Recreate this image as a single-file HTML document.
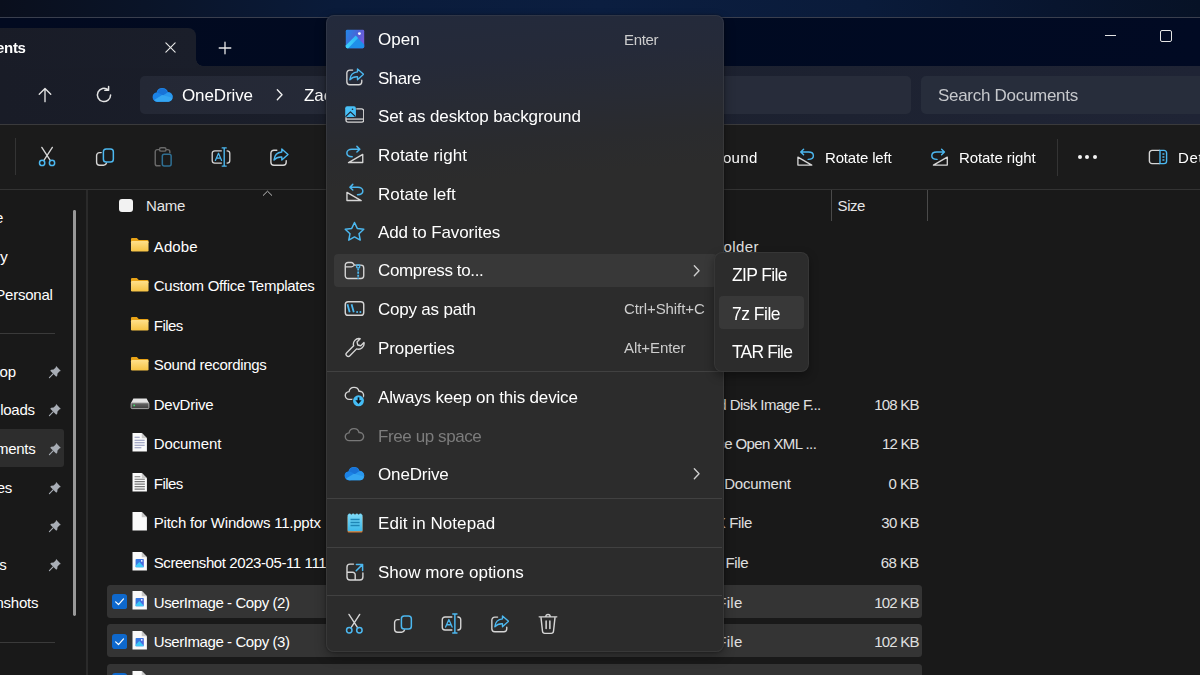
<!DOCTYPE html>
<html lang="en"><head><meta charset="utf-8"><title>File Explorer context menu</title>
<style>html,body{margin:0;padding:0;background:#191919}body{width:1200px;height:675px;overflow:hidden;position:relative;font-family:"Liberation Sans", sans-serif;-webkit-font-smoothing:antialiased}</style></head>
<body>
<div style="position:absolute;left:0px;top:0px;width:1200px;height:18px;background:linear-gradient(90deg,#0a0f1d 0%,#0a1428 12%,#0a1b3a 28%,#0b1e40 50%,#0a1b3a 72%,#08152e 88%,#071226 100%);border-radius:0px;"></div>
<div style="position:absolute;left:0px;top:17px;width:1200px;height:50px;background:linear-gradient(90deg,#020a20 0%,#000a21 50%,#010a23 100%);border-radius:0px;"></div>
<div style="position:absolute;left:0px;top:17px;width:1200px;height:1px;background:#3a3f4e;border-radius:0px;"></div>
<div style="position:absolute;left:0px;top:66px;width:1200px;height:58px;background:linear-gradient(90deg,#191c27 0%,#1a1e2a 25%,#1d2231 70%,#1f2435 100%);border-radius:0px;"></div>
<div style="position:absolute;left:-10px;top:28px;width:206px;height:40px;background:linear-gradient(90deg,#191c27 0%,#1a1e2a 100%);border-radius:0 8px 0 0;"></div>
<div style="position:absolute;left:196px;top:59px;width:7px;height:7px;background:radial-gradient(circle at 100% 0,rgba(0,0,0,0) 6.5px,#1a1e2a 7px)"></div>
<div style="position:absolute;left:140px;top:75.5px;width:771px;height:38px;background:linear-gradient(90deg,#242835 0%,#272c3a 60%);border-radius:5px;"></div>
<div style="position:absolute;left:920.5px;top:75.5px;width:300px;height:38px;background:#272d3b;border-radius:5px;"></div>
<div style="position:absolute;left:0px;top:124px;width:1200px;height:551px;background:#191919;border-radius:0px;"></div>
<div style="position:absolute;left:0px;top:123.5px;width:1200px;height:1px;background:#3a3a3c;border-radius:0px;"></div>
<div style="position:absolute;left:0px;top:124.5px;width:1200px;height:64.5px;background:#1b1b1b;border-radius:0px;"></div>
<div style="position:absolute;left:0px;top:189px;width:1200px;height:1px;background:#333333;border-radius:0px;"></div>
<span style="position:absolute;left:-53.29px;top:38.30px;line-height:20px;white-space:pre;font-size:15px;font-weight:700;color:#ffffff;letter-spacing:-0.350px;will-change:transform">Documents</span>
<svg style="position:absolute;left:164.4px;top:40.9px" width="13" height="13" viewBox="0 0 14 14"><path d="M2 2 L12 12 M12 2 L2 12" stroke="#e8e8e8" stroke-width="1.2" stroke-linecap="round"/></svg>
<svg style="position:absolute;left:217.5px;top:41px" width="14" height="14" viewBox="0 0 14 14"><path d="M7 1.2 V12.8 M1.2 7 H12.8" stroke="#e8e8e8" stroke-width="1.3" stroke-linecap="round"/></svg>
<div style="position:absolute;left:1104.5px;top:34.5px;width:11.5px;height:1.2px;background:#e4e4e4;border-radius:0px;"></div>
<div style="position:absolute;left:1160px;top:30px;width:9.6px;height:9.6px;border:1.2px solid #e4e4e4;border-radius:2px"></div>
<svg style="position:absolute;left:36.20px;top:86.00px;" width="18" height="18" viewBox="0 0 20 20" fill="none"><path d="M10 17.4 V3 M3.6 9.2 L10 2.8 L16.4 9.2" stroke="#e4e4e4" stroke-width="1.5" stroke-linecap="round" stroke-linejoin="round"/></svg>
<svg style="position:absolute;left:93.50px;top:85.00px;" width="20" height="20" viewBox="0 0 20 20" fill="none"><path d="M16.6 10 a6.6 6.6 0 1 1 -2.6 -5.3 M14.6 1.4 V5.2 H10.8" stroke="#e4e4e4" stroke-width="1.5" stroke-linecap="round" stroke-linejoin="round"/></svg>
<svg style="position:absolute;left:152.25px;top:83.75px;" width="21.5" height="21.5" viewBox="0 0 20 20" fill="none"><path d="M5 15.8 a3.7 3.7 0 0 1 -0.2 -7.4 a4.85 4.85 0 0 1 9.5 -0.3 a3.55 3.55 0 0 1 1 7.7 Z" fill="#1f86e6" stroke="#1f86e6" stroke-width="1.3" stroke-linejoin="round"/><path d="M4.8 8.4 a4.85 4.85 0 0 1 9.5 -0.3 L9 11.6 Z" fill="#1873d8"/><path d="M1 12.6 a3.7 3.7 0 0 1 3.8 -4.2 c1.6 0 3 .6 4.6 1.8 L13.6 13 L6 16.4 H5 a3.8 3.8 0 0 1 -4 -3.8 Z" fill="#1b82e6"/><path d="M9 11.4 L14.3 8.1 a3.9 3.9 0 0 1 4.8 4.5 L13.4 13.4 Z" fill="#2a98ee"/><path d="M2 14.8 L9.4 10.2 L19 12.8 a3.9 3.9 0 0 1 -3.7 3.6 H5 a3.8 3.8 0 0 1 -3 -1.6 Z" fill="#35a6f2"/></svg>
<span style="position:absolute;left:181.95px;top:85.80px;line-height:20px;white-space:pre;font-size:17px;font-weight:400;color:#ffffff;letter-spacing:-0.114px;will-change:transform">OneDrive</span>
<svg style="position:absolute;left:273.05px;top:88.45px;" width="13.5" height="13.5" viewBox="0 0 20 20" fill="none"><path d="M6.4 2.6 L13.4 10 L6.4 17.4" stroke="#f0f0f0" stroke-width="2" stroke-linecap="round" stroke-linejoin="round"/></svg>
<span style="position:absolute;left:304.05px;top:85.80px;line-height:20px;white-space:pre;font-size:17px;font-weight:400;color:#ffffff;letter-spacing:-0.015px;will-change:transform">Zac</span>
<span style="position:absolute;left:938.45px;top:86.00px;line-height:20px;white-space:pre;font-size:17px;font-weight:400;color:#c6c8cc;letter-spacing:-0.292px;will-change:transform">Search Documents</span>
<div style="position:absolute;left:15.2px;top:138px;width:1px;height:37px;background:#343434;border-radius:0px;"></div>
<svg style="position:absolute;left:36.45px;top:146.25px;" width="21.5" height="21.5" viewBox="0 0 20 20" fill="none"><path d="M5.4 1.3 L13.4 13.5 M15.2 1.3 L7.2 13.5" stroke="#d6d6d6" stroke-width="1.25" stroke-linecap="round"/><circle cx="5.7" cy="15.7" r="2.45" stroke="#4cb8f0" stroke-width="1.4"/><circle cx="14.9" cy="15.7" r="2.45" stroke="#4cb8f0" stroke-width="1.4"/></svg>
<svg style="position:absolute;left:95.00px;top:147.30px;" width="20" height="20" viewBox="0 0 20 20" fill="none"><path d="M6.2 5.6 H4.6 a3 3 0 0 0 -3 3 V15.2 a3 3 0 0 0 3 3 H8.6 a3 3 0 0 0 2.9 -2.2" stroke="#d6d6d6" stroke-width="1.4" stroke-linecap="round"/><rect x="8.4" y="1.95" width="9.95" height="13.1" rx="2.8" stroke="#4cb8f0" stroke-width="1.5"/></svg>
<svg style="position:absolute;left:152.25px;top:146.25px;" width="21.5" height="21.5" viewBox="0 0 20 20" fill="none"><path d="M7 3.4 H5 a2 2 0 0 0 -2 2 v11 a2 2 0 0 0 2 2 h3" stroke="#6a6a6a" stroke-width="1.3"/><path d="M13 3.4 h1.6 a2 2 0 0 1 2 2 v1.4" stroke="#6a6a6a" stroke-width="1.3"/><rect x="7" y="1.6" width="6" height="3.2" rx="1.4" stroke="#6a6a6a" stroke-width="1.3"/><rect x="9.6" y="7.6" width="8.2" height="11" rx="1.8" stroke="#2f6f93" stroke-width="1.4"/></svg>
<svg style="position:absolute;left:210.80px;top:147.00px;" width="20" height="20" viewBox="0 0 20 20" fill="none"><path d="M10.8 3.8 H3.8 a2.6 2.6 0 0 0 -2.6 2.6 v7.2 a2.6 2.6 0 0 0 2.6 2.6 H10.8" stroke="#d6d6d6" stroke-width="1.3"/><path d="M15.6 3.8 h0.6 a2.6 2.6 0 0 1 2.6 2.6 v7.2 a2.6 2.6 0 0 1 -2.6 2.6 h-0.6" stroke="#d6d6d6" stroke-width="1.3"/><path d="M4.4 13.4 L7.5 6.2 L10.6 13.4 M5.5 11.2 H9.5" stroke="#4cb8f0" stroke-width="1.25" stroke-linejoin="round" stroke-linecap="round"/><path d="M13.2 0.9 V19.1 M11.2 0.9 H15.2 M11.2 19.1 H15.2" stroke="#4cb8f0" stroke-width="1.4" stroke-linecap="round"/></svg>
<svg style="position:absolute;left:269.00px;top:147.30px;" width="20" height="20" viewBox="0 0 20 20" fill="none"><path d="M7.8 3.2 H4.9 a3 3 0 0 0 -3 3 v9 a3 3 0 0 0 3 3 h9.3 a3 3 0 0 0 3 -3 v-1.6" stroke="#d6d6d6" stroke-width="1.4" stroke-linecap="round"/><path d="M12.8 2 L19 7.5 L12.8 13 V10 C9.6 9.8 7 10.8 5 13 C5.4 8.6 8 5.4 12.8 5 Z" stroke="#4cb8f0" stroke-width="1.4" stroke-linejoin="round"/></svg>
<span style="position:absolute;left:567.35px;top:148.00px;line-height:20px;white-space:pre;font-size:15px;font-weight:400;color:#ffffff;letter-spacing:0.356px;will-change:transform">Set as desktop background</span>
<svg style="position:absolute;left:796.30px;top:147.70px;" width="19" height="19" viewBox="0 0 20 20" fill="none"><path d="M16.6 18 H2 V9.6 Z" stroke="#d6d6d6" stroke-width="1.4" stroke-linejoin="round"/><path d="M12.8 12 C16.2 12 18.3 10.4 18.3 8.2 C18.3 6 16.2 4.3 13.2 4.3 H5.8 M8 1.4 L5 4.3 L8 7.2" stroke="#4cb8f0" stroke-width="1.5" stroke-linecap="round" stroke-linejoin="round"/></svg>
<span style="position:absolute;left:824.75px;top:148.00px;line-height:20px;white-space:pre;font-size:15px;font-weight:400;color:#ffffff;letter-spacing:-0.170px;will-change:transform">Rotate left</span>
<svg style="position:absolute;left:930.30px;top:147.70px;" width="19" height="19" viewBox="0 0 20 20" fill="none"><path d="M3.6 18 H18.2 V9.6 Z" stroke="#d6d6d6" stroke-width="1.4" stroke-linejoin="round"/><path d="M7.4 12 C4 12 1.9 10.4 1.9 8.2 C1.9 6 4 4.3 7 4.3 H14.4 M12.2 1.4 L15.2 4.3 L12.2 7.2" stroke="#4cb8f0" stroke-width="1.5" stroke-linecap="round" stroke-linejoin="round"/></svg>
<span style="position:absolute;left:959.05px;top:148.00px;line-height:20px;white-space:pre;font-size:15px;font-weight:400;color:#ffffff;letter-spacing:-0.087px;will-change:transform">Rotate right</span>
<div style="position:absolute;left:1057px;top:138.5px;width:1px;height:37px;background:#343434;border-radius:0px;"></div>
<div style="position:absolute;left:1077.8px;top:155.1px;width:4px;height:4px;background:#f4f4f4;border-radius:2px;"></div>
<div style="position:absolute;left:1085.3999999999999px;top:155.1px;width:4px;height:4px;background:#f4f4f4;border-radius:2px;"></div>
<div style="position:absolute;left:1093.0px;top:155.1px;width:4px;height:4px;background:#f4f4f4;border-radius:2px;"></div>
<svg style="position:absolute;left:1148.20px;top:147.30px;" width="20" height="20" viewBox="0 0 20 20" fill="none"><path d="M12 3.4 H4 a2.6 2.6 0 0 0 -2.6 2.6 v8 a2.6 2.6 0 0 0 2.6 2.6 H12" stroke="#d6d6d6" stroke-width="1.4"/><path d="M12 3.4 H16 a2.6 2.6 0 0 1 2.6 2.6 v8 a2.6 2.6 0 0 1 -2.6 2.6 H12 Z" stroke="#4cb8f0" stroke-width="1.4"/><path d="M14.4 7 H16.4 M14.4 10 H16.4 M14.4 13 H16.4" stroke="#4cb8f0" stroke-width="1.3"/></svg>
<span style="position:absolute;left:1177.75px;top:148.00px;line-height:20px;white-space:pre;font-size:15px;font-weight:400;color:#ffffff;letter-spacing:0.719px;will-change:transform">Det</span>
<div style="position:absolute;left:86px;top:190px;width:2px;height:485px;background:#2a2a2a;border-radius:0px;"></div>
<div style="position:absolute;left:73.1px;top:210.3px;width:2.8px;height:405.4px;background:#989898;border-radius:1.4px;"></div>
<div style="position:absolute;left:-6px;top:429.4px;width:70.2px;height:37.8px;background:#2d2d2d;border-radius:3px;"></div>
<div style="position:absolute;left:0px;top:333px;width:54.5px;height:1px;background:#3a3a3a;border-radius:0px;"></div>
<div style="position:absolute;left:0px;top:641.5px;width:54.8px;height:1px;background:#3a3a3a;border-radius:0px;"></div>
<span style="position:absolute;left:-35.87px;top:208.20px;line-height:20px;white-space:pre;font-size:15px;font-weight:400;color:#ffffff;letter-spacing:-0.250px">Home</span>
<span style="position:absolute;left:-38.22px;top:247.40px;line-height:20px;white-space:pre;font-size:15px;font-weight:400;color:#ffffff;letter-spacing:-0.250px">Gallery</span>
<span style="position:absolute;left:-78.59px;top:284.60px;line-height:20px;white-space:pre;font-size:15px;font-weight:400;color:#ffffff;letter-spacing:-0.250px">OneDrive - Personal</span>
<span style="position:absolute;left:-37.53px;top:362.30px;line-height:20px;white-space:pre;font-size:15px;font-weight:400;color:#ffffff;letter-spacing:-0.250px">Desktop</span>
<span style="position:absolute;left:-37.22px;top:400.10px;line-height:20px;white-space:pre;font-size:15px;font-weight:400;color:#ffffff;letter-spacing:-0.250px">Downloads</span>
<span style="position:absolute;left:-38.09px;top:439.00px;line-height:20px;white-space:pre;font-size:15px;font-weight:400;color:#ffffff;letter-spacing:-0.250px">Documents</span>
<span style="position:absolute;left:-40.14px;top:478.20px;line-height:20px;white-space:pre;font-size:15px;font-weight:400;color:#ffffff;letter-spacing:-0.250px">Pictures</span>
<span style="position:absolute;left:-37.64px;top:554.80px;line-height:20px;white-space:pre;font-size:15px;font-weight:400;color:#ffffff;letter-spacing:-0.250px">Videos</span>
<span style="position:absolute;left:-42.49px;top:593.40px;line-height:20px;white-space:pre;font-size:15px;font-weight:400;color:#ffffff;letter-spacing:-0.250px">Screenshots</span>
<svg style="position:absolute;left:47.80px;top:364.50px;" width="14" height="14" viewBox="0 0 20 20" fill="none"><path d="M11.6 1.6 L18.4 8.4 L16.6 9 L13.6 12 L13.2 15.4 L11.8 16.8 L3.2 8.2 L4.6 6.8 L8 6.4 L11 3.4 Z" fill="#a8adb5"/><path d="M7.2 12.8 L2 18" stroke="#a8adb5" stroke-width="1.6" stroke-linecap="round"/></svg>
<svg style="position:absolute;left:47.80px;top:403.00px;" width="14" height="14" viewBox="0 0 20 20" fill="none"><path d="M11.6 1.6 L18.4 8.4 L16.6 9 L13.6 12 L13.2 15.4 L11.8 16.8 L3.2 8.2 L4.6 6.8 L8 6.4 L11 3.4 Z" fill="#a8adb5"/><path d="M7.2 12.8 L2 18" stroke="#a8adb5" stroke-width="1.6" stroke-linecap="round"/></svg>
<svg style="position:absolute;left:47.80px;top:442.00px;" width="14" height="14" viewBox="0 0 20 20" fill="none"><path d="M11.6 1.6 L18.4 8.4 L16.6 9 L13.6 12 L13.2 15.4 L11.8 16.8 L3.2 8.2 L4.6 6.8 L8 6.4 L11 3.4 Z" fill="#a8adb5"/><path d="M7.2 12.8 L2 18" stroke="#a8adb5" stroke-width="1.6" stroke-linecap="round"/></svg>
<svg style="position:absolute;left:47.80px;top:481.00px;" width="14" height="14" viewBox="0 0 20 20" fill="none"><path d="M11.6 1.6 L18.4 8.4 L16.6 9 L13.6 12 L13.2 15.4 L11.8 16.8 L3.2 8.2 L4.6 6.8 L8 6.4 L11 3.4 Z" fill="#a8adb5"/><path d="M7.2 12.8 L2 18" stroke="#a8adb5" stroke-width="1.6" stroke-linecap="round"/></svg>
<svg style="position:absolute;left:47.80px;top:519.00px;" width="14" height="14" viewBox="0 0 20 20" fill="none"><path d="M11.6 1.6 L18.4 8.4 L16.6 9 L13.6 12 L13.2 15.4 L11.8 16.8 L3.2 8.2 L4.6 6.8 L8 6.4 L11 3.4 Z" fill="#a8adb5"/><path d="M7.2 12.8 L2 18" stroke="#a8adb5" stroke-width="1.6" stroke-linecap="round"/></svg>
<svg style="position:absolute;left:47.80px;top:558.00px;" width="14" height="14" viewBox="0 0 20 20" fill="none"><path d="M11.6 1.6 L18.4 8.4 L16.6 9 L13.6 12 L13.2 15.4 L11.8 16.8 L3.2 8.2 L4.6 6.8 L8 6.4 L11 3.4 Z" fill="#a8adb5"/><path d="M7.2 12.8 L2 18" stroke="#a8adb5" stroke-width="1.6" stroke-linecap="round"/></svg>
<div style="position:absolute;left:119.2px;top:198.8px;width:14px;height:13.4px;background:#f2f2f2;border-radius:3px;"></div>
<span style="position:absolute;left:146.05px;top:196.40px;line-height:20px;white-space:pre;font-size:15px;font-weight:400;color:#e6e6e6;letter-spacing:-0.254px">Name</span>
<svg style="position:absolute;left:261.5px;top:190.2px" width="11" height="7" viewBox="0 0 11 7"><path d="M1 5.6 L5.5 1.2 L10 5.6" stroke="#bdbdbd" stroke-width="1" fill="none"/></svg>
<div style="position:absolute;left:831px;top:190px;width:1px;height:31px;background:#4a4a4a;border-radius:0px;"></div>
<div style="position:absolute;left:927px;top:190px;width:1px;height:31px;background:#4a4a4a;border-radius:0px;"></div>
<span style="position:absolute;left:837.55px;top:196.20px;line-height:20px;white-space:pre;font-size:15px;font-weight:400;color:#e6e6e6;letter-spacing:-0.422px">Size</span>
<div style="position:absolute;left:107.2px;top:584.5px;width:815.3px;height:33px;background:#343434;border-radius:3.5px;"></div>
<div style="position:absolute;left:107.2px;top:624.1px;width:815.3px;height:33px;background:#343434;border-radius:3.5px;"></div>
<div style="position:absolute;left:107.2px;top:663.6px;width:815.3px;height:33px;background:#343434;border-radius:3.5px;"></div>
<svg style="position:absolute;left:129.85px;top:235.35px;" width="19.5" height="19.5" viewBox="0 0 20 20" fill="none"><defs><linearGradient id="fg1" x1="0" y1="0" x2="0" y2="1"><stop offset="0" stop-color="#ffe08a"/><stop offset="1" stop-color="#f6c344"/></linearGradient></defs><path d="M1 4.2 a1.2 1.2 0 0 1 1.2 -1.2 H7 L9 5 H17.8 a1.2 1.2 0 0 1 1.2 1.2 V8 H1 Z" fill="#e8a317"/><rect x="1" y="6.2" width="18" height="10.6" rx="1.2" fill="url(#fg1)"/></svg>
<span style="position:absolute;left:153.75px;top:236.60px;line-height:20px;white-space:pre;font-size:15px;font-weight:400;color:#ffffff;letter-spacing:0.125px">Adobe</span>
<svg style="position:absolute;left:129.85px;top:274.90px;" width="19.5" height="19.5" viewBox="0 0 20 20" fill="none"><defs><linearGradient id="fg2" x1="0" y1="0" x2="0" y2="1"><stop offset="0" stop-color="#ffe08a"/><stop offset="1" stop-color="#f6c344"/></linearGradient></defs><path d="M1 4.2 a1.2 1.2 0 0 1 1.2 -1.2 H7 L9 5 H17.8 a1.2 1.2 0 0 1 1.2 1.2 V8 H1 Z" fill="#e8a317"/><rect x="1" y="6.2" width="18" height="10.6" rx="1.2" fill="url(#fg2)"/></svg>
<span style="position:absolute;left:153.75px;top:276.15px;line-height:20px;white-space:pre;font-size:15px;font-weight:400;color:#ffffff;letter-spacing:-0.270px">Custom Office Templates</span>
<svg style="position:absolute;left:129.85px;top:314.45px;" width="19.5" height="19.5" viewBox="0 0 20 20" fill="none"><defs><linearGradient id="fg3" x1="0" y1="0" x2="0" y2="1"><stop offset="0" stop-color="#ffe08a"/><stop offset="1" stop-color="#f6c344"/></linearGradient></defs><path d="M1 4.2 a1.2 1.2 0 0 1 1.2 -1.2 H7 L9 5 H17.8 a1.2 1.2 0 0 1 1.2 1.2 V8 H1 Z" fill="#e8a317"/><rect x="1" y="6.2" width="18" height="10.6" rx="1.2" fill="url(#fg3)"/></svg>
<span style="position:absolute;left:153.75px;top:315.70px;line-height:20px;white-space:pre;font-size:15px;font-weight:400;color:#ffffff;letter-spacing:-0.534px">Files</span>
<svg style="position:absolute;left:129.85px;top:354.00px;" width="19.5" height="19.5" viewBox="0 0 20 20" fill="none"><defs><linearGradient id="fg4" x1="0" y1="0" x2="0" y2="1"><stop offset="0" stop-color="#ffe08a"/><stop offset="1" stop-color="#f6c344"/></linearGradient></defs><path d="M1 4.2 a1.2 1.2 0 0 1 1.2 -1.2 H7 L9 5 H17.8 a1.2 1.2 0 0 1 1.2 1.2 V8 H1 Z" fill="#e8a317"/><rect x="1" y="6.2" width="18" height="10.6" rx="1.2" fill="url(#fg4)"/></svg>
<span style="position:absolute;left:153.75px;top:355.25px;line-height:20px;white-space:pre;font-size:15px;font-weight:400;color:#ffffff;letter-spacing:-0.299px">Sound recordings</span>
<svg style="position:absolute;left:129.80px;top:392.90px;" width="20" height="20" viewBox="0 0 20 20" fill="none"><defs><linearGradient id="dg5" x1="0" y1="0" x2="0" y2="1"><stop offset="0" stop-color="#6a6a6a"/><stop offset="1" stop-color="#3c3c3c"/></linearGradient></defs><path d="M3.4 5.6 H16.6 L19 10 H1 Z" fill="#e4e4e4"/><rect x="1.1" y="9.8" width="17.8" height="5.8" rx="1" fill="url(#dg5)" stroke="#c4c4c4" stroke-width=".8"/><circle cx="4.2" cy="12.4" r=".9" fill="#3fe06a"/></svg>
<span style="position:absolute;left:153.75px;top:394.80px;line-height:20px;white-space:pre;font-size:15px;font-weight:400;color:#ffffff;letter-spacing:-0.273px">DevDrive</span>
<svg style="position:absolute;left:129.30px;top:431.95px;" width="20.6" height="20.6" viewBox="0 0 20 20" fill="none"><path d="M3.4 1 H12.4 L17.4 6 V19 H3.4 Z" fill="#fafafa"/><path d="M12.4 1 V6 H17.4 Z" fill="#c9c9c9"/><path d="M5.4 5 H10.4 M5.4 8 H15.2 M5.4 10.4 H15.2 M5.4 12.8 H15.2 M5.4 15.2 H12" stroke="#8d93b8" stroke-width="1"/></svg>
<span style="position:absolute;left:153.75px;top:434.35px;line-height:20px;white-space:pre;font-size:15px;font-weight:400;color:#ffffff;letter-spacing:-0.109px">Document</span>
<svg style="position:absolute;left:129.30px;top:471.50px;" width="20.6" height="20.6" viewBox="0 0 20 20" fill="none"><path d="M3.4 1 H12.4 L17.4 6 V19 H3.4 Z" fill="#fafafa"/><path d="M12.4 1 V6 H17.4 Z" fill="#c9c9c9"/><path d="M5.4 4.6 H11 M5.4 7 H15.4 M5.4 9.4 H15.4 M5.4 11.8 H15.4 M5.4 14.2 H15.4 M5.4 16.6 H15.4" stroke="#777" stroke-width="1.1"/></svg>
<span style="position:absolute;left:153.75px;top:473.90px;line-height:20px;white-space:pre;font-size:15px;font-weight:400;color:#ffffff;letter-spacing:-0.534px">Files</span>
<svg style="position:absolute;left:129.30px;top:511.05px;" width="20.6" height="20.6" viewBox="0 0 20 20" fill="none"><path d="M3.4 1 H12.4 L17.4 6 V19 H3.4 Z" fill="#fafafa"/><path d="M12.4 1 V6 H17.4 Z" fill="#c9c9c9"/></svg>
<span style="position:absolute;left:153.75px;top:513.45px;line-height:20px;white-space:pre;font-size:15px;font-weight:400;color:#ffffff;letter-spacing:-0.212px">Pitch for Windows 11.pptx</span>
<svg style="position:absolute;left:129.30px;top:550.60px;" width="20.6" height="20.6" viewBox="0 0 20 20" fill="none"><path d="M3.4 1 H12.4 L17.4 6 V19 H3.4 Z" fill="#fafafa"/><path d="M12.4 1 V6 H17.4 Z" fill="#c9c9c9"/><defs><linearGradient id="ig6" x1="0" y1="0" x2="1" y2="1"><stop offset="0" stop-color="#2f7fe4"/><stop offset="1" stop-color="#5a5fd8"/></linearGradient></defs><rect x="6.4" y="7.8" width="8" height="8" rx=".8" fill="url(#ig6)"/><path d="M6.4 14.4 L10 10.8 L14.4 15.2 V15.8 H6.4 Z" fill="#3cc8f8"/><circle cx="12.4" cy="9.6" r=".8" fill="#fff"/></svg>
<span style="position:absolute;left:153.75px;top:553.00px;line-height:20px;white-space:pre;font-size:15px;font-weight:400;color:#ffffff;letter-spacing:-0.410px">Screenshot 2023-05-11 111</span>
<svg style="position:absolute;left:129.30px;top:590.15px;" width="20.6" height="20.6" viewBox="0 0 20 20" fill="none"><path d="M3.4 1 H12.4 L17.4 6 V19 H3.4 Z" fill="#fafafa"/><path d="M12.4 1 V6 H17.4 Z" fill="#c9c9c9"/><defs><linearGradient id="ig7" x1="0" y1="0" x2="1" y2="1"><stop offset="0" stop-color="#2f7fe4"/><stop offset="1" stop-color="#5a5fd8"/></linearGradient></defs><rect x="6.4" y="7.8" width="8" height="8" rx=".8" fill="url(#ig7)"/><path d="M6.4 14.4 L10 10.8 L14.4 15.2 V15.8 H6.4 Z" fill="#3cc8f8"/><circle cx="12.4" cy="9.6" r=".8" fill="#fff"/></svg>
<span style="position:absolute;left:153.75px;top:592.55px;line-height:20px;white-space:pre;font-size:15px;font-weight:400;color:#ffffff;letter-spacing:-0.421px">UserImage - Copy (2)</span>
<svg style="position:absolute;left:129.30px;top:629.70px;" width="20.6" height="20.6" viewBox="0 0 20 20" fill="none"><path d="M3.4 1 H12.4 L17.4 6 V19 H3.4 Z" fill="#fafafa"/><path d="M12.4 1 V6 H17.4 Z" fill="#c9c9c9"/><defs><linearGradient id="ig8" x1="0" y1="0" x2="1" y2="1"><stop offset="0" stop-color="#2f7fe4"/><stop offset="1" stop-color="#5a5fd8"/></linearGradient></defs><rect x="6.4" y="7.8" width="8" height="8" rx=".8" fill="url(#ig8)"/><path d="M6.4 14.4 L10 10.8 L14.4 15.2 V15.8 H6.4 Z" fill="#3cc8f8"/><circle cx="12.4" cy="9.6" r=".8" fill="#fff"/></svg>
<span style="position:absolute;left:153.75px;top:632.10px;line-height:20px;white-space:pre;font-size:15px;font-weight:400;color:#ffffff;letter-spacing:-0.421px">UserImage - Copy (3)</span>
<svg style="position:absolute;left:129.30px;top:669.55px;" width="20.6" height="20.6" viewBox="0 0 20 20" fill="none"><path d="M3.4 1 H12.4 L17.4 6 V19 H3.4 Z" fill="#fafafa"/><path d="M12.4 1 V6 H17.4 Z" fill="#c9c9c9"/><defs><linearGradient id="ig9" x1="0" y1="0" x2="1" y2="1"><stop offset="0" stop-color="#2f7fe4"/><stop offset="1" stop-color="#5a5fd8"/></linearGradient></defs><rect x="6.4" y="7.8" width="8" height="8" rx=".8" fill="url(#ig9)"/><path d="M6.4 14.4 L10 10.8 L14.4 15.2 V15.8 H6.4 Z" fill="#3cc8f8"/><circle cx="12.4" cy="9.6" r=".8" fill="#fff"/></svg>
<svg style="position:absolute;left:112px;top:593.95px" width="15.2" height="15.2" viewBox="0 0 15 15"><rect width="15" height="15" rx="3" fill="#0e68cc"/><path d="M3.6 7.8 L6.4 10.4 L11.4 4.8" stroke="#fff" stroke-width="1.2" fill="none" stroke-linecap="round" stroke-linejoin="round"/></svg>
<svg style="position:absolute;left:112px;top:633.5px" width="15.2" height="15.2" viewBox="0 0 15 15"><rect width="15" height="15" rx="3" fill="#0e68cc"/><path d="M3.6 7.8 L6.4 10.4 L11.4 4.8" stroke="#fff" stroke-width="1.2" fill="none" stroke-linecap="round" stroke-linejoin="round"/></svg>
<svg style="position:absolute;left:112px;top:673.05px" width="15.2" height="15.2" viewBox="0 0 15 15"><rect width="15" height="15" rx="3" fill="#0e68cc"/><path d="M3.6 7.8 L6.4 10.4 L11.4 4.8" stroke="#fff" stroke-width="1.2" fill="none" stroke-linecap="round" stroke-linejoin="round"/></svg>
<span style="position:absolute;left:688.47px;top:236.60px;line-height:20px;white-space:pre;font-size:15px;font-weight:400;color:#e0e0e0;letter-spacing:0.428px">File folder</span>
<span style="position:absolute;left:695.80px;top:394.80px;line-height:20px;white-space:pre;font-size:15px;font-weight:400;color:#e0e0e0;letter-spacing:-0.547px">Hard Disk Image F...</span>
<span style="position:absolute;left:696.65px;top:434.35px;line-height:20px;white-space:pre;font-size:15px;font-weight:400;color:#e0e0e0;letter-spacing:-0.595px">Office Open XML ...</span>
<span style="position:absolute;left:693.73px;top:473.90px;line-height:20px;white-space:pre;font-size:15px;font-weight:400;color:#e0e0e0;letter-spacing:-0.234px">Text Document</span>
<span style="position:absolute;left:687.61px;top:513.45px;line-height:20px;white-space:pre;font-size:15px;font-weight:400;color:#e0e0e0;letter-spacing:-0.343px">PPTX File</span>
<span style="position:absolute;left:690.33px;top:553.00px;line-height:20px;white-space:pre;font-size:15px;font-weight:400;color:#e0e0e0;letter-spacing:-0.368px">PNG File</span>
<span style="position:absolute;left:682.93px;top:592.55px;line-height:20px;white-space:pre;font-size:15px;font-weight:400;color:#e0e0e0;letter-spacing:0.261px">JPG File</span>
<span style="position:absolute;left:682.93px;top:632.10px;line-height:20px;white-space:pre;font-size:15px;font-weight:400;color:#e0e0e0;letter-spacing:0.261px">JPG File</span>
<span style="position:absolute;left:874.25px;top:394.80px;line-height:20px;white-space:pre;font-size:15px;font-weight:400;color:#e0e0e0;letter-spacing:-0.786px">108 KB</span>
<span style="position:absolute;left:882.05px;top:434.35px;line-height:20px;white-space:pre;font-size:15px;font-weight:400;color:#e0e0e0;letter-spacing:-0.835px">12 KB</span>
<span style="position:absolute;left:888.55px;top:473.90px;line-height:20px;white-space:pre;font-size:15px;font-weight:400;color:#e0e0e0;letter-spacing:-0.583px">0 KB</span>
<span style="position:absolute;left:881.25px;top:513.45px;line-height:20px;white-space:pre;font-size:15px;font-weight:400;color:#e0e0e0;letter-spacing:-0.675px">30 KB</span>
<span style="position:absolute;left:880.75px;top:553.00px;line-height:20px;white-space:pre;font-size:15px;font-weight:400;color:#e0e0e0;letter-spacing:-0.575px">68 KB</span>
<span style="position:absolute;left:874.25px;top:592.55px;line-height:20px;white-space:pre;font-size:15px;font-weight:400;color:#e0e0e0;letter-spacing:-0.786px">102 KB</span>
<span style="position:absolute;left:874.25px;top:632.10px;line-height:20px;white-space:pre;font-size:15px;font-weight:400;color:#e0e0e0;letter-spacing:-0.786px">102 KB</span>
<div style="position:absolute;left:325.8px;top:14.5px;width:398.0px;height:637.1px;border-radius:8px;background:linear-gradient(176deg,#232a3c 0px,#252a39 55px,#282b34 100px,#2a2b2e 140px,#2c2c2c 175px,#2c2c2c 100%);box-shadow:inset 0 0 0 1px rgba(255,255,255,0.06),0 5px 12px rgba(0,0,0,0.30),0 0 3px rgba(0,0,0,0.40)"></div>
<div style="position:absolute;left:333.6px;top:253.8px;width:383px;height:33px;background:#383838;border-radius:4px;"></div>
<div style="position:absolute;left:326.8px;top:371.0px;width:395.6px;height:1px;background:#414141;border-radius:0px;"></div>
<div style="position:absolute;left:326.8px;top:497.8px;width:395.6px;height:1px;background:#414141;border-radius:0px;"></div>
<div style="position:absolute;left:326.8px;top:547.1px;width:395.6px;height:1px;background:#414141;border-radius:0px;"></div>
<div style="position:absolute;left:326.8px;top:595.2px;width:395.6px;height:1px;background:#414141;border-radius:0px;"></div>
<svg style="position:absolute;left:344.70px;top:28.50px;" width="20" height="20" viewBox="0 0 20 20" fill="none"><defs><linearGradient id="pg110" x1="0" y1="0.2" x2="1" y2="0.6"><stop offset="0" stop-color="#2684e6"/><stop offset="0.55" stop-color="#4a63d6"/><stop offset="1" stop-color="#7a5cdc"/></linearGradient><linearGradient id="pg211" x1="0" y1="1" x2="1" y2="0"><stop offset="0" stop-color="#3fd4fb"/><stop offset="1" stop-color="#2fb4f6"/></linearGradient></defs><rect x="0.8" y="0.8" width="18.4" height="18.4" rx="1.4" fill="url(#pg110)"/><path d="M10.7 6.9 L19.2 15.4 V17.8 a1.4 1.4 0 0 1 -1.4 1.4 H2.2 a1.4 1.4 0 0 1 -1.4 -1.4 V16.6 Z" fill="#1e8fea"/><path d="M0.8 16.4 L10.7 6.6 L13.1 9 L3.2 19.2 H2.2 a1.4 1.4 0 0 1 -1.4 -1.4 Z" fill="url(#pg211)"/><circle cx="14.4" cy="4.6" r="1.45" fill="#f6f4ff"/></svg>
<span style="position:absolute;left:377.95px;top:30.20px;line-height:20px;white-space:pre;font-size:17px;font-weight:400;color:#ffffff;letter-spacing:0.027px;will-change:transform">Open</span>
<svg style="position:absolute;left:344.85px;top:67.45px;" width="19.5" height="19.5" viewBox="0 0 20 20" fill="none"><path d="M7.8 3.2 H4.9 a3 3 0 0 0 -3 3 v9 a3 3 0 0 0 3 3 h9.3 a3 3 0 0 0 3 -3 v-1.6" stroke="#d6d6d6" stroke-width="1.4" stroke-linecap="round"/><path d="M12.8 2 L19 7.5 L12.8 13 V10 C9.6 9.8 7 10.8 5 13 C5.4 8.6 8 5.4 12.8 5 Z" stroke="#4cb8f0" stroke-width="1.4" stroke-linejoin="round"/></svg>
<span style="position:absolute;left:377.95px;top:68.80px;line-height:20px;white-space:pre;font-size:17px;font-weight:400;color:#ffffff;letter-spacing:-0.535px;will-change:transform">Share</span>
<svg style="position:absolute;left:344.85px;top:106.05px;" width="19.5" height="19.5" viewBox="0 0 20 20" fill="none"><path d="M11.6 3 H17 a2.2 2.2 0 0 1 2.2 2.2 V14.4 a2.2 2.2 0 0 1 -2.2 2.2 H3.2 a2.2 2.2 0 0 1 -2.2 -2.2 V11.6" stroke="#d6d6d6" stroke-width="1.3"/><path d="M1 13.4 H19.2" stroke="#d6d6d6" stroke-width="1.3"/><rect x="0.2" y="0.2" width="11" height="11.2" rx="2" fill="#48c0f6"/><path d="M0.9 10.6 L5.6 6 L10.5 10.6" stroke="#1d2230" stroke-width="1.2" stroke-linejoin="round"/><circle cx="7.7" cy="3.3" r="0.85" fill="#1d2230"/></svg>
<span style="position:absolute;left:377.95px;top:107.40px;line-height:20px;white-space:pre;font-size:17px;font-weight:400;color:#ffffff;letter-spacing:-0.133px;will-change:transform">Set as desktop background</span>
<svg style="position:absolute;left:344.85px;top:144.65px;" width="19.5" height="19.5" viewBox="0 0 20 20" fill="none"><path d="M3.6 18 H18.2 V9.6 Z" stroke="#d6d6d6" stroke-width="1.4" stroke-linejoin="round"/><path d="M7.4 12 C4 12 1.9 10.4 1.9 8.2 C1.9 6 4 4.3 7 4.3 H14.4 M12.2 1.4 L15.2 4.3 L12.2 7.2" stroke="#4cb8f0" stroke-width="1.5" stroke-linecap="round" stroke-linejoin="round"/></svg>
<span style="position:absolute;left:377.95px;top:146.00px;line-height:20px;white-space:pre;font-size:17px;font-weight:400;color:#ffffff;letter-spacing:0.109px;will-change:transform">Rotate right</span>
<svg style="position:absolute;left:344.85px;top:183.25px;" width="19.5" height="19.5" viewBox="0 0 20 20" fill="none"><path d="M16.6 18 H2 V9.6 Z" stroke="#d6d6d6" stroke-width="1.4" stroke-linejoin="round"/><path d="M12.8 12 C16.2 12 18.3 10.4 18.3 8.2 C18.3 6 16.2 4.3 13.2 4.3 H5.8 M8 1.4 L5 4.3 L8 7.2" stroke="#4cb8f0" stroke-width="1.5" stroke-linecap="round" stroke-linejoin="round"/></svg>
<span style="position:absolute;left:377.95px;top:184.60px;line-height:20px;white-space:pre;font-size:17px;font-weight:400;color:#ffffff;letter-spacing:0.018px;will-change:transform">Rotate left</span>
<svg style="position:absolute;left:344.20px;top:220.80px;" width="21" height="21" viewBox="0 0 20 20" fill="none"><path d="M10.00 1.40 L12.65 7.06 L18.84 7.83 L14.28 12.09 L15.47 18.22 L10.00 15.20 L4.53 18.22 L5.72 12.09 L1.16 7.83 L7.35 7.06 Z" stroke="#4cb8f0" stroke-width="1.4" stroke-linejoin="round"/></svg>
<span style="position:absolute;left:377.95px;top:223.20px;line-height:20px;white-space:pre;font-size:17px;font-weight:400;color:#ffffff;letter-spacing:-0.099px;will-change:transform">Add to Favorites</span>
<svg style="position:absolute;left:344.30px;top:259.50px;" width="21" height="21" viewBox="0 0 20 20" fill="none"><path d="M1.2 5 a2.6 2.6 0 0 1 2.6 -2.6 H7 a2 2 0 0 1 1.5 0.7 L10 4.9 H16.2 a2.6 2.6 0 0 1 2.6 2.6 V15 a2.6 2.6 0 0 1 -2.6 2.6 H3.8 a2.6 2.6 0 0 1 -2.6 -2.6 Z" stroke="#d6d6d6" stroke-width="1.3" stroke-linejoin="round"/><path d="M1.2 6.5 H7 c1 0 1.6 -0.4 2.6 -1.4" stroke="#d6d6d6" stroke-width="1.2"/><rect x="12.1" y="4.6" width="2.8" height="3" rx=".7" stroke="#4cb8f0" stroke-width="1.2"/><path d="M13.5 8 V18" stroke="#4cb8f0" stroke-width="1.7" stroke-dasharray="2 1"/></svg>
<span style="position:absolute;left:377.95px;top:261.40px;line-height:20px;white-space:pre;font-size:17px;font-weight:400;color:#ffffff;letter-spacing:-0.368px;will-change:transform">Compress to...</span>
<svg style="position:absolute;left:344.30px;top:298.10px;" width="21" height="21" viewBox="0 0 20 20" fill="none"><rect x="1.2" y="3.5" width="17.6" height="13" rx="2.8" stroke="#d6d6d6" stroke-width="1.35"/><path d="M3.3 5.9 L5.4 13.6 M7.2 5.9 L9.3 13.6" stroke="#4cb8f0" stroke-width="1.7" stroke-linecap="butt"/><circle cx="12.5" cy="13.4" r=".95" fill="#4cb8f0"/><circle cx="15.6" cy="13.4" r=".95" fill="#4cb8f0"/></svg>
<span style="position:absolute;left:377.95px;top:300.00px;line-height:20px;white-space:pre;font-size:17px;font-weight:400;color:#ffffff;letter-spacing:-0.207px;will-change:transform">Copy as path</span>
<svg style="position:absolute;left:344.40px;top:336.70px;" width="21" height="21" viewBox="0 0 20 20" fill="none"><path d="M15.4 1.6 L12.4 4.7 L13.1 7.6 L16 8.3 L19 5.2 A5.3 5.3 0 0 1 12 11.3 L5.6 17.9 A2.1 2.1 0 0 1 2.6 14.9 L9.2 8.4 A5.3 5.3 0 0 1 15.4 1.6 Z" stroke="#d6d6d6" stroke-width="1.3" stroke-linejoin="round"/></svg>
<span style="position:absolute;left:377.95px;top:338.60px;line-height:20px;white-space:pre;font-size:17px;font-weight:400;color:#ffffff;letter-spacing:-0.078px;will-change:transform">Properties</span>
<svg style="position:absolute;left:344.30px;top:385.90px;" width="21" height="21" viewBox="0 0 20 20" fill="none"><g transform="translate(0,-3.1)"><path d="M5 15.8 a3.7 3.7 0 0 1 -0.2 -7.4 a4.85 4.85 0 0 1 9.5 -0.3 a3.55 3.55 0 0 1 1 7.7 Z" stroke="#d6d6d6" stroke-width="1.3" stroke-linejoin="round"/></g><circle cx="13.8" cy="14.1" r="5.9" fill="#2c2c2c"/><circle cx="13.8" cy="14.1" r="5.2" fill="#45bdf5"/><path d="M13.8 10.8 V15" stroke="#10141a" stroke-width="1.6"/><path d="M10.8 13.6 H16.8 L13.8 17.2 Z" fill="#10141a"/></svg>
<span style="position:absolute;left:377.95px;top:387.80px;line-height:20px;white-space:pre;font-size:17px;font-weight:400;color:#ffffff;letter-spacing:-0.170px;will-change:transform">Always keep on this device</span>
<svg style="position:absolute;left:344.20px;top:423.70px;" width="21" height="21" viewBox="0 0 20 20" fill="none"><path d="M5 15.8 a3.7 3.7 0 0 1 -0.2 -7.4 a4.85 4.85 0 0 1 9.5 -0.3 a3.55 3.55 0 0 1 1 7.7 Z" stroke="#787878" stroke-width="1.3" stroke-linejoin="round"/></svg>
<span style="position:absolute;left:377.95px;top:426.60px;line-height:20px;white-space:pre;font-size:17px;font-weight:400;color:#7c7c7c;letter-spacing:-0.407px;will-change:transform">Free up space</span>
<svg style="position:absolute;left:344.20px;top:462.50px;" width="21" height="21" viewBox="0 0 20 20" fill="none"><path d="M5 15.8 a3.7 3.7 0 0 1 -0.2 -7.4 a4.85 4.85 0 0 1 9.5 -0.3 a3.55 3.55 0 0 1 1 7.7 Z" fill="#1f86e6" stroke="#1f86e6" stroke-width="1.3" stroke-linejoin="round"/><path d="M4.8 8.4 a4.85 4.85 0 0 1 9.5 -0.3 L9 11.6 Z" fill="#1873d8"/><path d="M1 12.6 a3.7 3.7 0 0 1 3.8 -4.2 c1.6 0 3 .6 4.6 1.8 L13.6 13 L6 16.4 H5 a3.8 3.8 0 0 1 -4 -3.8 Z" fill="#1b82e6"/><path d="M9 11.4 L14.3 8.1 a3.9 3.9 0 0 1 4.8 4.5 L13.4 13.4 Z" fill="#2a98ee"/><path d="M2 14.8 L9.4 10.2 L19 12.8 a3.9 3.9 0 0 1 -3.7 3.6 H5 a3.8 3.8 0 0 1 -3 -1.6 Z" fill="#35a6f2"/></svg>
<span style="position:absolute;left:377.95px;top:465.20px;line-height:20px;white-space:pre;font-size:17px;font-weight:400;color:#ffffff;letter-spacing:-0.139px;will-change:transform">OneDrive</span>
<svg style="position:absolute;left:344.50px;top:512.60px;" width="20" height="20" viewBox="0 0 20 20" fill="none"><defs><linearGradient id="ng12" x1="0" y1="0" x2="0" y2="1"><stop offset="0" stop-color="#7bd8f6"/><stop offset="1" stop-color="#3db9ea"/></linearGradient></defs><rect x="2.6" y="3" width="14.9" height="16.6" rx="1" fill="#e27a2c"/><rect x="2.6" y="1.6" width="14.9" height="16.6" rx="1" fill="url(#ng12)"/><circle cx="4.6" cy="1.8" r="1.3" fill="#7bd8f6"/><circle cx="8.2" cy="1.8" r="1.3" fill="#7bd8f6"/><circle cx="11.8" cy="1.8" r="1.3" fill="#7bd8f6"/><circle cx="15.4" cy="1.8" r="1.3" fill="#7bd8f6"/><path d="M5.5 6.4 H14.6 M5.5 9.4 H14.6 M5.5 12.4 H14.6" stroke="#1e86b6" stroke-width="1.5"/></svg>
<span style="position:absolute;left:377.95px;top:514.00px;line-height:20px;white-space:pre;font-size:17px;font-weight:400;color:#ffffff;letter-spacing:0.063px;will-change:transform">Edit in Notepad</span>
<svg style="position:absolute;left:344.70px;top:561.70px;" width="20" height="20" viewBox="0 0 20 20" fill="none"><path d="M8.5 2.1 H5 a3 3 0 0 0 -3 3 V15 a3 3 0 0 0 3 3 H14.9 a3 3 0 0 0 3 -3 V11" stroke="#d6d6d6" stroke-width="1.4" stroke-linecap="round"/><path d="M2 10.2 H7.6 a2.6 2.6 0 0 1 2.6 2.6 V18" stroke="#d6d6d6" stroke-width="1.4"/><path d="M11.4 2.4 H17.6 V8.6 M17.4 2.6 L11.2 8.8" stroke="#4cb8f0" stroke-width="1.5" stroke-linecap="round" stroke-linejoin="round"/></svg>
<span style="position:absolute;left:377.95px;top:563.20px;line-height:20px;white-space:pre;font-size:17px;font-weight:400;color:#ffffff;letter-spacing:0.022px;will-change:transform">Show more options</span>
<span style="position:absolute;left:623.55px;top:29.50px;line-height:20px;white-space:pre;font-size:15px;font-weight:400;color:#cdcdcd;letter-spacing:-0.332px;will-change:transform">Enter</span>
<span style="position:absolute;left:623.55px;top:299.30px;line-height:20px;white-space:pre;font-size:15px;font-weight:400;color:#cdcdcd;letter-spacing:-0.084px;will-change:transform">Ctrl+Shift+C</span>
<span style="position:absolute;left:623.55px;top:337.90px;line-height:20px;white-space:pre;font-size:15px;font-weight:400;color:#cdcdcd;letter-spacing:-0.069px;will-change:transform">Alt+Enter</span>
<svg style="position:absolute;left:690.05px;top:263.85px;" width="13.5" height="13.5" viewBox="0 0 20 20" fill="none"><path d="M6.4 2.6 L13.4 10 L6.4 17.4" stroke="#cfcfcf" stroke-width="2" stroke-linecap="round" stroke-linejoin="round"/></svg>
<svg style="position:absolute;left:690.05px;top:467.45px;" width="13.5" height="13.5" viewBox="0 0 20 20" fill="none"><path d="M6.4 2.6 L13.4 10 L6.4 17.4" stroke="#cfcfcf" stroke-width="2" stroke-linecap="round" stroke-linejoin="round"/></svg>
<svg style="position:absolute;left:343.40px;top:613.00px;" width="22" height="22" viewBox="0 0 20 20" fill="none"><path d="M5.4 1.3 L13.4 13.5 M15.2 1.3 L7.2 13.5" stroke="#d6d6d6" stroke-width="1.25" stroke-linecap="round"/><circle cx="5.7" cy="15.7" r="2.45" stroke="#4cb8f0" stroke-width="1.4"/><circle cx="14.9" cy="15.7" r="2.45" stroke="#4cb8f0" stroke-width="1.4"/></svg>
<svg style="position:absolute;left:393.20px;top:613.90px;" width="20" height="20" viewBox="0 0 20 20" fill="none"><path d="M6.2 5.6 H4.6 a3 3 0 0 0 -3 3 V15.2 a3 3 0 0 0 3 3 H8.6 a3 3 0 0 0 2.9 -2.2" stroke="#d6d6d6" stroke-width="1.4" stroke-linecap="round"/><rect x="8.4" y="1.95" width="9.95" height="13.1" rx="2.8" stroke="#4cb8f0" stroke-width="1.5"/></svg>
<svg style="position:absolute;left:440.50px;top:613.40px;" width="21" height="21" viewBox="0 0 20 20" fill="none"><path d="M10.8 3.8 H3.8 a2.6 2.6 0 0 0 -2.6 2.6 v7.2 a2.6 2.6 0 0 0 2.6 2.6 H10.8" stroke="#d6d6d6" stroke-width="1.3"/><path d="M15.6 3.8 h0.6 a2.6 2.6 0 0 1 2.6 2.6 v7.2 a2.6 2.6 0 0 1 -2.6 2.6 h-0.6" stroke="#d6d6d6" stroke-width="1.3"/><path d="M4.4 13.4 L7.5 6.2 L10.6 13.4 M5.5 11.2 H9.5" stroke="#4cb8f0" stroke-width="1.25" stroke-linejoin="round" stroke-linecap="round"/><path d="M13.2 0.9 V19.1 M11.2 0.9 H15.2 M11.2 19.1 H15.2" stroke="#4cb8f0" stroke-width="1.4" stroke-linecap="round"/></svg>
<svg style="position:absolute;left:489.65px;top:614.45px;" width="19.5" height="19.5" viewBox="0 0 20 20" fill="none"><path d="M7.8 3.2 H4.9 a3 3 0 0 0 -3 3 v9 a3 3 0 0 0 3 3 h9.3 a3 3 0 0 0 3 -3 v-1.6" stroke="#d6d6d6" stroke-width="1.4" stroke-linecap="round"/><path d="M12.8 2 L19 7.5 L12.8 13 V10 C9.6 9.8 7 10.8 5 13 C5.4 8.6 8 5.4 12.8 5 Z" stroke="#4cb8f0" stroke-width="1.4" stroke-linejoin="round"/></svg>
<svg style="position:absolute;left:536.50px;top:613.00px;" width="22" height="22" viewBox="0 0 20 20" fill="none"><path d="M2 3.5 H18 M8 3.3 a2 2 0 0 1 4 0" stroke="#d6d6d6" stroke-width="1.3" stroke-linecap="round"/><path d="M3.6 3.8 L5 16.6 a2.1 2.1 0 0 0 2.1 1.9 h5.8 a2.1 2.1 0 0 0 2.1 -1.9 L16.4 3.8" stroke="#d6d6d6" stroke-width="1.3"/><path d="M8.3 7.4 V14 M11.7 7.4 V14" stroke="#d6d6d6" stroke-width="1.4" stroke-linecap="round"/></svg>
<div style="position:absolute;left:713.8px;top:251.8px;width:95px;height:120.2px;border-radius:8px;background:#2c2c2c;box-shadow:inset 0 0 0 1px rgba(255,255,255,0.05),0 4px 10px rgba(0,0,0,0.35)"></div>
<div style="position:absolute;left:718.8px;top:295.6px;width:85.7px;height:33px;background:#383838;border-radius:4px;"></div>
<span style="position:absolute;left:732.12px;top:265.30px;line-height:20px;white-space:pre;font-size:17.5px;font-weight:400;color:#ffffff;letter-spacing:-0.652px;will-change:transform">ZIP File</span>
<span style="position:absolute;left:732.12px;top:303.50px;line-height:20px;white-space:pre;font-size:17.5px;font-weight:400;color:#ffffff;letter-spacing:-0.500px;will-change:transform">7z File</span>
<span style="position:absolute;left:732.12px;top:342.40px;line-height:20px;white-space:pre;font-size:17.5px;font-weight:400;color:#ffffff;letter-spacing:-0.839px;will-change:transform">TAR File</span>
</body></html>
